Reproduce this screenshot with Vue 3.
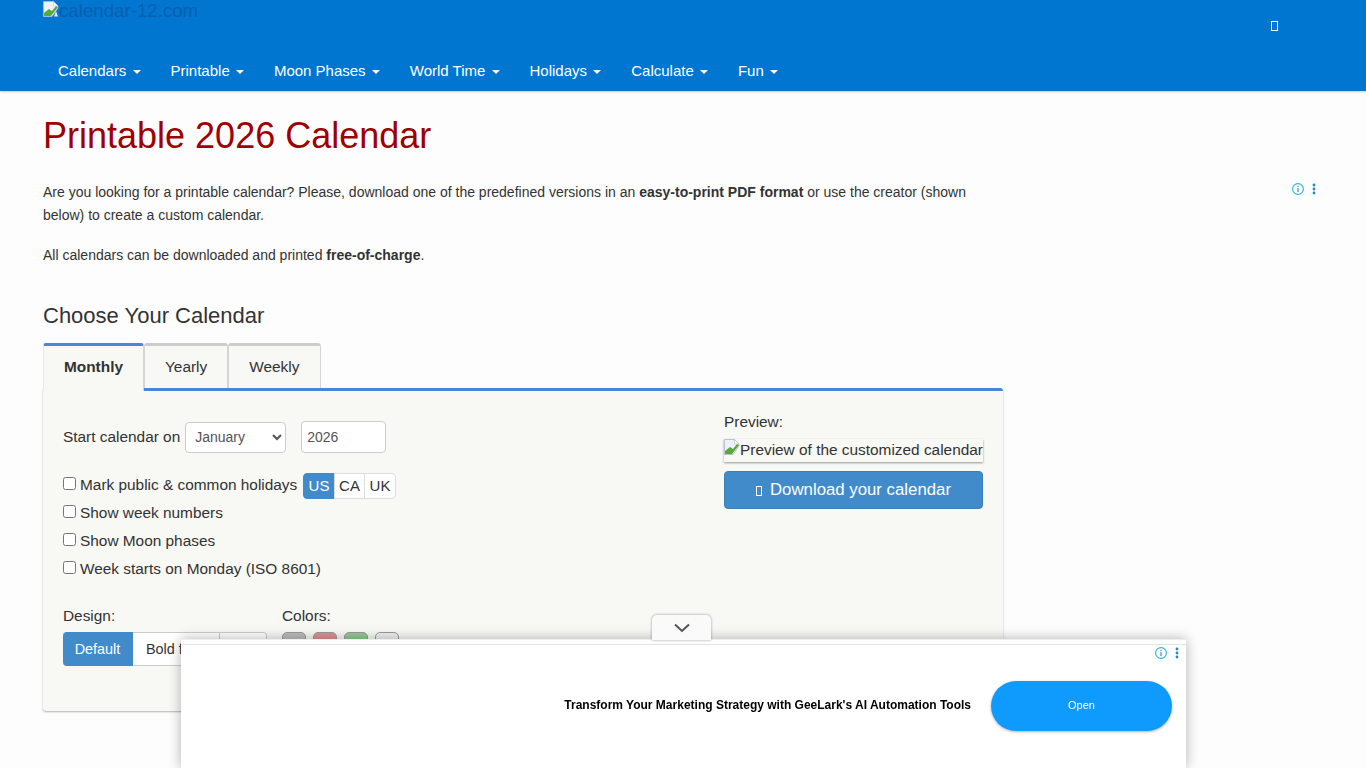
<script setup>
const navItems = ['Calendars', 'Printable', 'Moon Phases', 'World Time', 'Holidays', 'Calculate', 'Fun']
const checks = ['Show week numbers', 'Show Moon phases', 'Week starts on Monday (ISO 8601)']
const months = ['January', 'February', 'March', 'April', 'May', 'June', 'July', 'August', 'September', 'October', 'November', 'December']
const swatches = ['#bcbcbc', '#dd9292', '#92ca92', '#efefef']
</script>

<template>
  <div class="page">
    <header class="header">
      <div class="logo-row">
        <div class="logo">
          <svg class="broken" width="16" height="16" viewBox="0 0 16 16">
            <path d="M.5.5h10l4.500 4.500v2L9 15.500H.5z" fill="#eef0fc" stroke="#b8bcc8" stroke-width=".7" />
            <path d="M1 15v-3l5-4 3 2 4-5 2 1-7 9z" fill="#5aa83c" />
            <path d="M10.500.5v4.500h4.500z" fill="#fff" stroke="#b8bcc8" stroke-width=".5" />
            <path d="M13 10l2 5.500h-4z" fill="#dfe8f4" />
          </svg>
          <span class="logo-alt">calendar-12.com</span>
        </div>
        <span class="tofu user"></span>
      </div>
      <nav class="nav">
        <a v-for="item in navItems" :key="item" class="nav-item">{{ item }}<i class="caret"></i></a>
      </nav>
    </header>

    <main class="main">
      <div class="content">
        <h1>Printable 2026 Calendar</h1>
        <p class="intro">Are you looking for a printable calendar? Please, download one of the predefined versions in an <b>easy-to-print PDF format</b> or use the creator (shown below) to create a custom calendar.</p>
        <p class="intro second">All calendars can be downloaded and printed <b>free-of-charge</b>.</p>
        <h2>Choose Your Calendar</h2>

        <div class="tabs">
          <div class="tab active">Monthly</div>
          <div class="tab">Yearly</div>
          <div class="tab">Weekly</div>
        </div>

        <section class="panel">
          <div class="left">
            <div class="start-row">
              <label>Start calendar on</label>
              <select class="field month">
                <option v-for="m in months" :key="m">{{ m }}</option>
              </select>
              <input class="field year" value="2026" />
            </div>

            <div class="check-row holiday">
              <label><input type="checkbox" />Mark public &amp; common holidays</label>
              <div class="country">
                <span class="on">US</span><span>CA</span><span>UK</span>
              </div>
            </div>
            <div v-for="c in checks" :key="c" class="check-row">
              <label><input type="checkbox" />{{ c }}</label>
            </div>

            <div class="options">
              <div class="design">
                <div class="opt-label">Design:</div>
                <div class="design-group">
                  <span class="on">Default</span><span>Bold font</span><span></span>
                </div>
              </div>
              <div class="colors">
                <div class="opt-label">Colors:</div>
                <div class="swatches">
                  <span v-for="s in swatches" :key="s" class="swatch" :style="{ background: s }"></span>
                </div>
              </div>
            </div>
          </div>

          <div class="right">
            <div class="preview-label">Preview:</div>
            <div class="preview">
              <svg class="broken" width="16" height="16" viewBox="0 0 16 16">
                <path d="M.5.5h10l4.500 4.500v2L9 15.500H.5z" fill="#eef0fc" stroke="#a8acb8" stroke-width=".7" />
                <path d="M1 15v-3l5-4 3 2 4-5 2 1-7 9z" fill="#5aa83c" />
                <path d="M10.500.5v4.500h4.500z" fill="#fff" stroke="#a8acb8" stroke-width=".5" />
              </svg>Preview of the customized calendar
            </div>
            <button class="download"><span class="tofu small"></span>Download your calendar</button>
          </div>
        </section>
      </div>

      <aside class="side-ad">
        <svg width="14" height="14" viewBox="0 0 14 14">
          <circle cx="7" cy="7" r="5.400" fill="none" stroke="#28b4d8" stroke-width="1.100" />
          <rect x="6.400" y="6" width="1.200" height="4" fill="#28a0c0" />
          <rect x="6.400" y="3.800" width="1.200" height="1.200" fill="#28a0c0" />
        </svg>
        <svg width="4" height="12" viewBox="0 0 4 12">
          <circle cx="2" cy="2" r="1.400" fill="#1d8fb0" />
          <circle cx="2" cy="6" r="1.400" fill="#1d8fb0" />
          <circle cx="2" cy="10" r="1.400" fill="#1d8fb0" />
        </svg>
      </aside>
    </main>

    <div class="anchor">
      <div class="anchor-toggle">
        <svg width="18" height="10" viewBox="0 0 18 10"><path d="M2 1.500l7 6.500 7-6.500" fill="none" stroke="#555" stroke-width="2" /></svg>
      </div>
      <div class="anchor-icons">
        <svg width="14" height="14" viewBox="0 0 14 14">
          <circle cx="7" cy="7" r="5.400" fill="none" stroke="#28b4d8" stroke-width="1.100" />
          <rect x="6.400" y="6" width="1.200" height="4" fill="#28a0c0" />
          <rect x="6.400" y="3.800" width="1.200" height="1.200" fill="#28a0c0" />
        </svg>
        <svg width="4" height="12" viewBox="0 0 4 12">
          <circle cx="2" cy="2" r="1.400" fill="#1d8fb0" />
          <circle cx="2" cy="6" r="1.400" fill="#1d8fb0" />
          <circle cx="2" cy="10" r="1.400" fill="#1d8fb0" />
        </svg>
      </div>
      <div class="anchor-body">
        <span class="ad-title">Transform Your Marketing Strategy with GeeLark's AI Automation Tools</span>
        <span class="ad-open">Open</span>
      </div>
    </div>
  </div>
</template>

<style>
html, body { margin: 0; overflow: hidden; background: #fdfdfd; }
</style>

<style scoped>
.page {
  height: 768px;
  overflow: hidden;
  font-family: "Liberation Sans", Arial, sans-serif;
  font-size: 14px;
  color: #333;
  background: #fdfdfd;
}
.header {
  height: 91px;
  box-sizing: border-box;
  background: #0076d1;
  padding-left: 43px;
  box-shadow: 0 1px 2px rgba(0, 0, 0, .2);
}
.logo-row { height: 50px; display: flex; justify-content: space-between; }
.logo { display: flex; align-items: flex-start; padding-top: 1px; height: 18px; }
.logo-alt { font-size: 18.700px; line-height: 20px; color: #0a5fae; }
.tofu { display: inline-block; box-sizing: border-box; border: 1px solid #fff; }
.user { width: 7px; height: 10px; margin: 21px 88px 0 0; }
.nav { display: flex; }
.nav-item {
  padding: 0 15px;
  line-height: 42px;
  font-size: 15px;
  color: #fff;
  white-space: nowrap;
}
.caret {
  display: inline-block;
  margin-left: 6.170px;
  vertical-align: middle;
  border-top: 4px solid #fff;
  border-left: 4px solid transparent;
  border-right: 4px solid transparent;
}
.main { position: relative; padding: 0 43px; }
.content { width: 960px; }
h1 {
  margin: 0;
  padding-top: 24px;
  font-size: 36px;
  line-height: 42px;
  font-weight: 400;
  color: #a00000;
}
.intro { margin: 0; padding-top: 24px; line-height: 23px; }
.intro.second { padding-top: 17px; }
h2 {
  margin: 0;
  padding-top: 36px;
  font-size: 22px;
  line-height: 26px;
  font-weight: 400;
}
.tabs { display: flex; margin-top: 14px; height: 45px; position: relative; z-index: 1; }
.tab {
  box-sizing: border-box;
  height: 45px;
  padding: 0 20px;
  font-size: 15.400px;
  line-height: 42px;
  background: #f8f8f5;
  border: 1px solid #d5d5d5;
  border-top: 3px solid #ccc;
  border-bottom: 0;
  border-radius: 3px 3px 0 0;
}
.tab:last-child { padding-right: 21px; }
.tab.active {
  height: 48px;
  width: 101px;
  font-weight: 700;
  color: #333;
  border-top-color: #4a86d8;
  border-left-color: #e8e8e8;
  border-right-color: #d5d5d5;
}
.panel {
  box-sizing: border-box;
  height: 323px;
  display: flex;
  justify-content: space-between;
  background: #f8f8f5;
  border-top: 3px solid #4a86d8;
  border-radius: 3px;
  box-shadow: 0 1px 2px rgba(0, 0, 0, .3);
  padding: 0 20px;
}
.left { width: 640px; font-size: 15.400px; }
.start-row { display: flex; align-items: center; padding-top: 30px; }
.field {
  box-sizing: border-box;
  background: #fff;
  border: 1px solid #ccc;
  border-radius: 4px;
  font: 14px "Liberation Sans", Arial, sans-serif;
  color: #555;
}
.month { width: 101px; height: 31px; margin-left: 5px; padding-left: 5px; }
.year { width: 85px; height: 32px; margin-left: 15px; padding: 0 5px; outline: 0; }
.check-row { display: flex; align-items: center; height: 28px; }
.check-row label { display: flex; align-items: center; padding-top: 2px; }
.check-row input { width: 13px; height: 13px; margin: 0 4px 4px 0; }
.holiday { margin-top: 17px; }
.country { display: flex; margin: 4px 0 0 6px; height: 26px; }
.country span {
  box-sizing: border-box;
  width: 31.500px;
  font-size: 15px;
  line-height: 24px;
  text-align: center;
  background: #fff;
  border: 1px solid #ddd;
  margin-left: -1px;
}
.country span:first-child { margin-left: 0; border-radius: 4px 0 0 4px; }
.country span:last-child { border-radius: 0 4px 4px 0; }
.country .on { background: #428bca; border-color: #428bca; color: #fff; }
.options { display: flex; margin-top: 24px; }
.design { width: 219px; }
.opt-label { line-height: 20px; margin-bottom: 6px; }
.design-group { display: flex; height: 34px; width: 204px; }
.design-group span {
  box-sizing: border-box;
  font-size: 14.400px;
  line-height: 32px;
  background: #fff;
  border: 1px solid #ccc;
  border-left: 0;
  white-space: nowrap;
  overflow: hidden;
  width: 47px;
}
.design-group span:nth-child(1) {
  width: 70px;
  background: #428bca;
  border-color: #428bca;
  color: #fff;
  text-align: center;
  border-radius: 4px 0 0 4px;
}
.design-group span:nth-child(2) { width: 87px; padding-left: 13px; }
.design-group span:last-child { border-radius: 0 4px 4px 0; }
.swatches { display: flex; gap: 7px; }
.swatch {
  box-sizing: border-box;
  width: 24px;
  height: 24px;
  border: 1px solid #999;
  border-radius: 5px;
}
.right { width: 259px; padding-top: 21px; }
.preview-label { font-size: 15.400px; line-height: 20px; }
.preview {
  margin-top: 7px;
  height: 23px;
  font-size: 15.400px;
  line-height: 22px;
  white-space: nowrap;
  overflow: hidden;
  display: flex;
  align-items: flex-start;
  box-shadow: 0 1px 2px rgba(0, 0, 0, .4);
}
.broken { flex: none; }
.download {
  margin-top: 9px;
  width: 259px;
  height: 38px;
  background: #428bca;
  border: 1px solid #3b7fbb;
  border-radius: 4px;
  color: #fff;
  font: 16.800px "Liberation Sans", Arial, sans-serif;
  display: flex;
  align-items: center;
  justify-content: center;
}
.tofu.small { width: 6px; height: 10px; margin: 2px 8px 0 0; }
.side-ad {
  position: absolute;
  left: 1291px;
  top: 91px;
  display: flex;
  align-items: center;
  gap: 7px;
}
.anchor {
  position: fixed;
  left: 181px;
  top: 639px;
  width: 1005px;
  height: 129px;
  background: #fff;
  box-shadow: 0 0 12px rgba(0, 0, 0, .3);
  border-top: 1px solid #eee;
  box-sizing: border-box;
}
.anchor::before {
  content: "";
  position: absolute;
  left: 0;
  right: 0;
  top: 4px;
  border-top: 1px solid #e4e4e4;
}
.anchor-toggle {
  position: absolute;
  left: 471px;
  top: -25px;
  width: 59px;
  height: 25px;
  background: #fafafa;
  border-radius: 5px 5px 0 0;
  box-shadow: 0 0 3px rgba(0, 0, 0, .4);
  display: flex;
  align-items: center;
  justify-content: center;
}
.anchor-icons {
  position: absolute;
  right: 7px;
  top: 6px;
  display: flex;
  align-items: center;
  gap: 7px;
}
.anchor-body {
  height: 127px;
  padding: 3px 14px 0 0;
  box-sizing: border-box;
  display: flex;
  align-items: center;
  justify-content: flex-end;
}
.ad-title { font-size: 12px; font-weight: 700; color: #000; margin-right: 20px; }
.ad-open {
  width: 181px;
  height: 50px;
  margin-top: 2px;
  border-radius: 25px;
  background: #0f9bfd;
  color: #fff;
  font-size: 11px;
  line-height: 48px;
  text-align: center;
  box-shadow: 0 1px 3px rgba(0, 0, 0, .3);
}
</style>
